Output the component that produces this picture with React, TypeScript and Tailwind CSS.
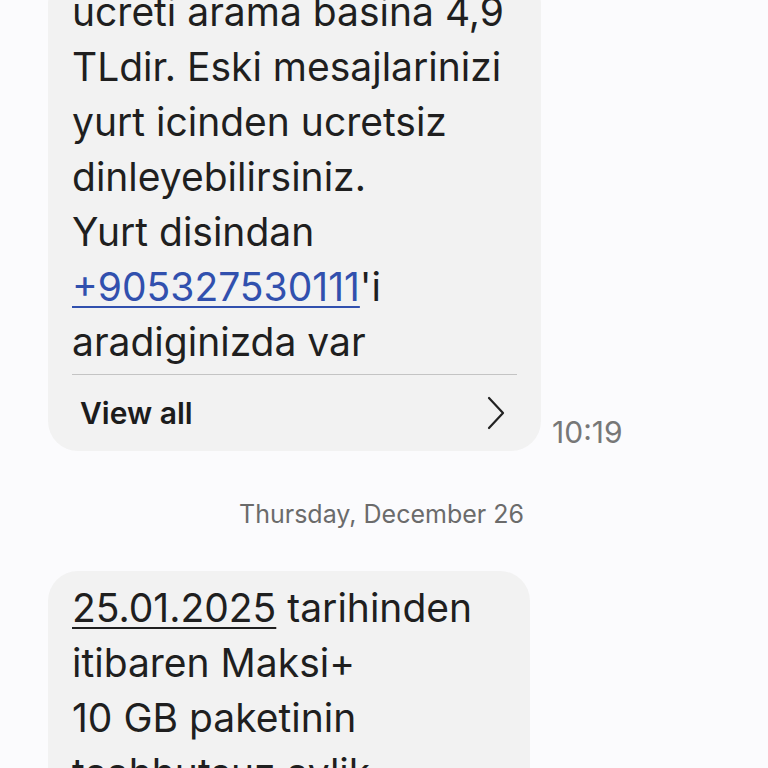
const font = { fontFamily: "Inter, Roboto, 'Noto Sans', sans-serif" };

export default function App() {
  return (
    <div className="w-[768px] h-[768px] overflow-hidden bg-[#fbfbfd] text-[#1f1f1f]" style={font}>
      {/* first message */}
      <div className="flex items-end gap-[11px] pl-[48px] mt-[-26px]">
        <div className="w-[493px] rounded-[30px] bg-[#f2f2f2] pt-[10px]">
          <div className="px-[24px] text-[39px] leading-[55px]">
            <div>ucreti arama basina 4,9</div>
            <div>TLdir. Eski mesajlarinizi</div>
            <div>yurt icinden ucretsiz</div>
            <div>dinleyebilirsiniz.</div>
            <div>Yurt disindan</div>
            <div>
              <span className="text-[#3150ae] underline decoration-[2px] underline-offset-[5px]">+905327530111</span>'i
            </div>
            <div>aradiginizda var</div>
          </div>
          <div className="mx-[24px] mt-[5px] h-px bg-[#c4c4c4]" />
          <div className="flex items-center justify-between pl-[32px] pr-[36px] h-[76px]">
            <span className="text-[30px] font-semibold text-[#1c1c1c]">View all</span>
            <svg width="18" height="34" viewBox="0 0 18 34" fill="none" stroke="#222" strokeWidth="2.2" strokeLinecap="round" strokeLinejoin="round">
              <path d="M2 2 L16 17 L2 32" />
            </svg>
          </div>
        </div>
        <span className="text-[30px] text-[#777] mb-[-4px]">10:19</span>
      </div>

      {/* date divider */}
      <div className="w-[524px] text-right text-[25px] text-[#6b6b6b] mt-[45px]">Thursday, December 26</div>

      {/* second message */}
      <div className="pl-[48px] mt-[37px]">
        <div className="w-[482px] rounded-[30px] bg-[#f2f2f2] pt-[9px] pb-[20px]">
          <div className="px-[24px] text-[39px] leading-[55px]">
            <div>
              <span className="underline decoration-[2px] underline-offset-[5px]">25.01.2025</span> tarihinden
            </div>
            <div>itibaren Maksi+</div>
            <div>10 GB paketinin</div>
            <div>taahhutsuz aylik</div>
            <div>ucreti</div>
          </div>
        </div>
      </div>
    </div>
  );
}
